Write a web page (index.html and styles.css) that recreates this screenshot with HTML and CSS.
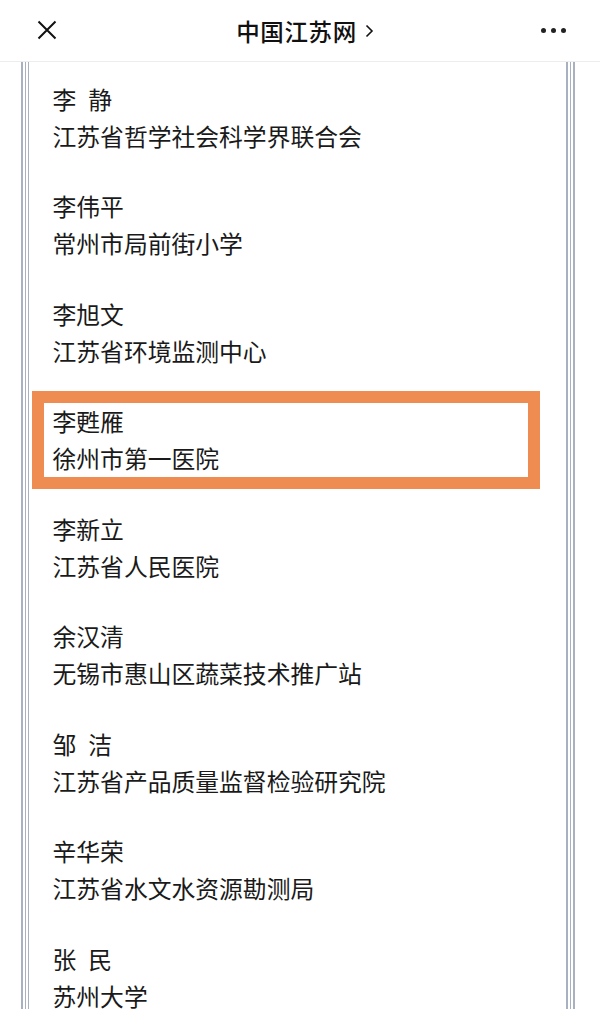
FILE: index.html
```html
<!DOCTYPE html>
<html lang="zh-CN">
<head>
<meta charset="utf-8">
<title>中国江苏网</title>
<link rel="stylesheet" href="styles.css">
</head>
<body>
<div class="page">
  <header class="topbar">
    <span class="close-btn">
      <svg width="20" height="20" viewBox="0 0 20 20"><path d="M1.5 1.5 L18.5 18.5 M18.5 1.5 L1.5 18.5" stroke="#111" stroke-width="2" fill="none"/></svg>
    </span>
    <div class="title">中国江苏网<svg class="chev" width="9" height="14" viewBox="0 0 9 14"><path d="M1.5 1.5 L7 7 L1.5 12.5" stroke="#111" stroke-width="1.6" fill="none"/></svg></div>
    <span class="more-btn"><i></i><i></i><i></i></span>
  </header>
  <main class="main">
    <div class="frame frame-left"></div>
    <div class="content">
      <div class="entry"><div class="name">李&ensp;静</div><div class="org">江苏省哲学社会科学界联合会</div></div>
      <div class="entry"><div class="name">李伟平</div><div class="org">常州市局前街小学</div></div>
      <div class="entry"><div class="name">李旭文</div><div class="org">江苏省环境监测中心</div></div>
      <div class="entry highlight"><div class="name">李甦雁</div><div class="org">徐州市第一医院</div></div>
      <div class="entry"><div class="name">李新立</div><div class="org">江苏省人民医院</div></div>
      <div class="entry"><div class="name">余汉清</div><div class="org">无锡市惠山区蔬菜技术推广站</div></div>
      <div class="entry"><div class="name">邹&ensp;洁</div><div class="org">江苏省产品质量监督检验研究院</div></div>
      <div class="entry"><div class="name">辛华荣</div><div class="org">江苏省水文水资源勘测局</div></div>
      <div class="entry"><div class="name">张&ensp;民</div><div class="org">苏州大学</div></div>
    </div>
    <div class="frame frame-right"></div>
  </main>
</div>
</body>
</html>
```

FILE: styles.css
```css
html, body {
  margin: 0;
  padding: 0;
  background: #fff;
}
.page {
  width: 600px;
  height: 1009px;
  overflow: hidden;
  display: flex;
  flex-direction: column;
  font-family: "Noto Sans CJK SC", "Noto Sans", sans-serif;
  color: #1a1a1a;
}
.topbar {
  height: 61px;
  flex: none;
  border-bottom: 1.5px solid #ededed;
  display: flex;
  align-items: center;
  position: relative;
}
.close-btn {
  width: 20px;
  height: 20px;
  margin-left: 37px;
  margin-top: -1px;
  display: flex;
}
.title {
  flex: 1;
  display: flex;
  justify-content: center;
  align-items: center;
  font-size: 23.5px;
  font-weight: 500;
  color: #111;
  margin-left: 12px;
  letter-spacing: 0.6px;
}
.chev {
  margin-left: 8px;
}
.more-btn {
  display: flex;
  gap: 5px;
  margin-right: 34px;
}
.more-btn i {
  display: block;
  width: 5px;
  height: 5px;
  border-radius: 50%;
  background: #222;
}
.main {
  flex: 1;
  display: flex;
  min-height: 0;
}
.frame {
  width: 8.5px;
  flex: none;
  background: repeating-linear-gradient(to right, #a9b1c1 0 1.5px, transparent 1.5px 3.5px);
}
.frame-left {
  margin-left: 20.5px;
}
.frame-right {
  margin-right: 25.5px;
}
.content {
  flex: 1;
  padding: 17.5px 0 0 23.5px;
  display: flex;
  flex-direction: column;
  gap: 33.5px;
}
.entry {
  font-size: 23.8px;
  line-height: 37px;
  position: relative;
}
.name, .org {
  white-space: nowrap;
}
.highlight::after {
  content: "";
  position: absolute;
  left: -21px;
  top: -11.5px;
  width: 508px;
  height: 98px;
  border: 12px solid #ef8c52;
  box-sizing: border-box;
}
```
